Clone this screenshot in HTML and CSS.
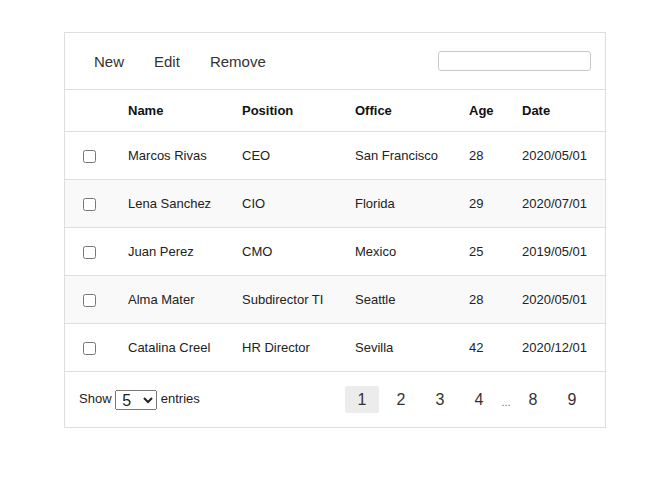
FILE: index.html
```html
<!DOCTYPE html>
<html>
<head>
<meta charset="utf-8">
<link rel="stylesheet" href="styles.css">
</head>
<body>
<div class="card">
  <div class="toolbar">
    <div class="actions">
      <button class="action">New</button>
      <button class="action">Edit</button>
      <button class="action">Remove</button>
    </div>
    <input class="search" type="text">
  </div>
  <table class="grid">
    <colgroup>
      <col class="c-check"><col class="c-name"><col class="c-pos"><col class="c-office"><col class="c-age"><col class="c-date">
    </colgroup>
    <thead>
      <tr><th></th><th>Name</th><th>Position</th><th>Office</th><th>Age</th><th>Date</th></tr>
    </thead>
    <tbody>
      <tr><td class="check"><input type="checkbox"></td><td>Marcos Rivas</td><td>CEO</td><td>San Francisco</td><td>28</td><td>2020/05/01</td></tr>
      <tr><td class="check"><input type="checkbox"></td><td>Lena Sanchez</td><td>CIO</td><td>Florida</td><td>29</td><td>2020/07/01</td></tr>
      <tr><td class="check"><input type="checkbox"></td><td>Juan Perez</td><td>CMO</td><td>Mexico</td><td>25</td><td>2019/05/01</td></tr>
      <tr><td class="check"><input type="checkbox"></td><td>Alma Mater</td><td>Subdirector TI</td><td>Seattle</td><td>28</td><td>2020/05/01</td></tr>
      <tr><td class="check"><input type="checkbox"></td><td>Catalina Creel</td><td>HR Director</td><td>Sevilla</td><td>42</td><td>2020/12/01</td></tr>
    </tbody>
  </table>
  <div class="footer">
    <div class="show">Show <select class="entries"><option>5</option><option>10</option></select> entries</div>
    <div class="pager">
      <button class="page active">1</button>
      <button class="page">2</button>
      <button class="page">3</button>
      <button class="page">4</button>
      <span class="dots">...</span>
      <button class="page">8</button>
      <button class="page">9</button>
    </div>
  </div>
</div>
</body>
</html>
```

FILE: styles.css
```css
* { box-sizing: border-box; }
body {
  margin: 0;
  padding: 32px 0 0 64px;
  font-family: "Liberation Sans", Arial, sans-serif;
  background: #fff;
  color: #333;
}
.card {
  width: 542px;
  border: 1px solid #dedede;
  background: #fff;
}
.toolbar {
  height: 57px;
  border-bottom: 1px solid #dedede;
  display: flex;
  align-items: center;
  justify-content: space-between;
  padding: 0 14px 0 14px;
}
.actions { display: flex; }
.action {
  font-family: "Liberation Sans", Arial, sans-serif;
  font-size: 15px;
  color: #333;
  background: none;
  border: none;
  padding: 0 15px;
  margin: 0;
  cursor: pointer;
}
.search {
  width: 153px;
  height: 20px;
  border: 1px solid #c8c8c8;
  border-radius: 3px;
  margin: 0;
  padding: 0 4px;
}
.grid {
  width: 540px;
  table-layout: fixed;
  border-collapse: separate;
  border-spacing: 0;
  font-family: "Liberation Sans", Arial, sans-serif;
  font-size: 13px;
}
.c-check { width: 48px; }
.c-name { width: 114px; }
.c-pos { width: 113px; }
.c-office { width: 114px; }
.c-age { width: 53px; }
.c-date { width: 98px; }
.grid th {
  height: 42px;
  padding: 0 0 0 15px;
  text-align: left;
  font-weight: bold;
  color: #111;
  border-bottom: 1px solid #dedede;
  white-space: nowrap;
}
.grid td {
  height: 48px;
  padding: 0 0 1px 15px;
  color: #222;
  border-bottom: 1px solid #dedede;
  white-space: nowrap;
}
.grid tbody tr:nth-child(even) td { background: #f9f9f9; }
.grid td.check { padding-left: 18px; }
.grid td.check input {
  margin: 0;
  width: 13px;
  height: 13px;
  vertical-align: middle;
}
.footer {
  height: 55px;
  display: flex;
  align-items: center;
  justify-content: space-between;
  padding: 0 16px 0 14px;
}
.show {
  font-size: 13px;
  color: #222;
}
.entries {
  width: 42px;
  height: 20px;
  font-family: "Liberation Sans", Arial, sans-serif;
  font-size: 16px;
  color: #222;
  margin: 0;
  padding: 0 0 0 2px;
  vertical-align: middle;
}
.pager {
  display: flex;
  align-items: center;
  gap: 5px;
}
.page {
  width: 34px;
  height: 27px;
  font-family: "Liberation Sans", Arial, sans-serif;
  font-size: 16px;
  color: #333;
  background: none;
  border: none;
  border-radius: 2px;
  padding: 0;
  margin: 0;
}
.page.active { background: #ececec; }
.dots {
  width: 10px;
  font-size: 11px;
  color: #666;
  padding-top: 5px;
  text-align: center;
}
```
